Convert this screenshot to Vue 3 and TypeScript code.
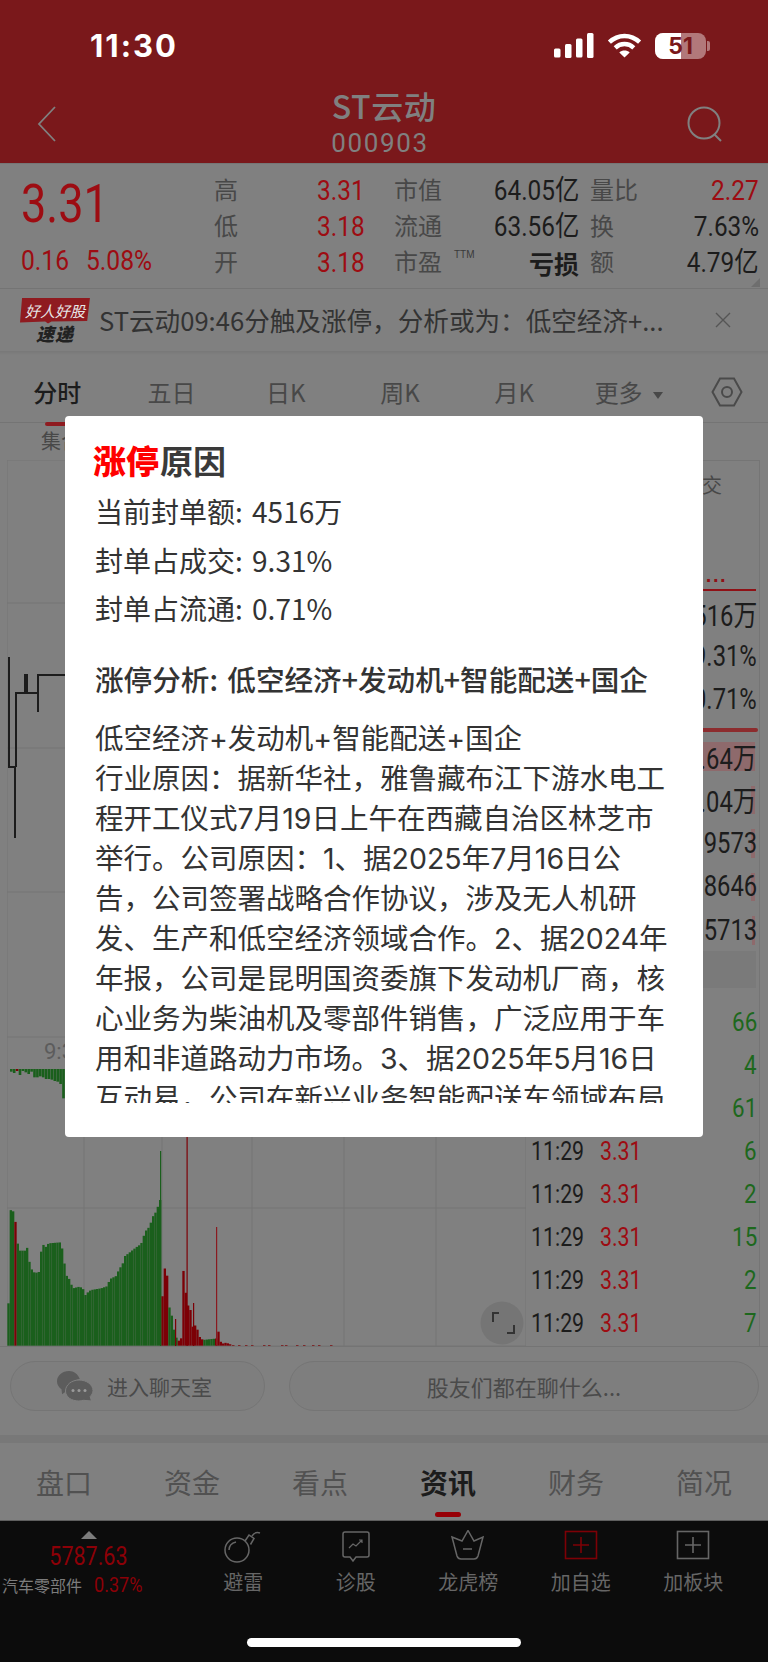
<script setup lang="ts">
const stats = [
  [{ l: '高', v: '3.31', c: 'red' }, { l: '市值', v: '64.05亿', c: '' }, { l: '量比', v: '2.27', c: 'red' }],
  [{ l: '低', v: '3.18', c: 'red' }, { l: '流通', v: '63.56亿', c: '' }, { l: '换', v: '7.63%', c: '' }],
  [{ l: '开', v: '3.18', c: 'red' }, { l: '市盈', v: '亏损', c: 'loss' }, { l: '额', v: '4.79亿', c: '' }],
]
const periods = ['分时', '五日', '日K', '周K', '月K']
const paragraph = [
  '低空经济+发动机+智能配送+国企',
  '行业原因：据新华社，雅鲁藏布江下游水电工',
  '程开工仪式7月19日上午在西藏自治区林芝市',
  '举行。公司原因：1、据2025年7月16日公',
  '告，公司签署战略合作协议，涉及无人机研',
  '发、生产和低空经济领域合作。2、据2024年',
  '年报，公司是昆明国资委旗下发动机厂商，核',
  '心业务为柴油机及零部件销售，广泛应用于车',
  '用和非道路动力市场。3、据2025年5月16日',
  '互动易，公司在新兴业务智能配送车领域布局',
]
const bookTop = ['4516万', '9.31%', '0.71%']
const bookRows = [
  { v: '1.64万', w: 200 },
  { v: '1.04万', w: 4 },
  { v: '9573', w: 4 },
  { v: '8646', w: 4 },
  { v: '5713', w: 3 },
]
const ticks = [66, 4, 61, 6, 2, 15, 2, 7]
const tabs = ['盘口', '资金', '看点', '资讯', '财务', '简况']

type P = [number, number]
const envelope: P[] = [
  [22, 790], [28, 510], [38, 515], [45, 558], [52, 632], [75, 632], [80, 618], [86, 675], [95, 695], [105, 700],
  [110, 690], [115, 700], [120, 635], [128, 612], [135, 622], [142, 610], [180, 607], [187, 650], [195, 705],
  [205, 718], [215, 745], [235, 740], [245, 745], [253, 765], [262, 755], [270, 750], [300, 745], [320, 738],
  [325, 718], [345, 708], [352, 692], [365, 670], [372, 648], [405, 622], [420, 612], [432, 575], [445, 560],
  [455, 530], [465, 515], [477, 480], [482, 795], [490, 690], [496, 663], [502, 795], [510, 815], [520, 875],
  [530, 905], [540, 895], [545, 688], [552, 705], [555, 785], [568, 810], [575, 860], [585, 855], [595, 890],
  [605, 900], [650, 895], [653, 865], [660, 912], [675, 908], [690, 914],
]
function topAt(x: number): number {
  for (let i = 1; i < envelope.length; i++) {
    const [x0, y0] = envelope[i - 1]
    const [x1, y1] = envelope[i]
    if (x <= x1) return y0 + ((y1 - y0) * (x - x0)) / (x1 - x0)
  }
  return 915
}
const GREEN = '#1a5f1c'
const RED = '#7c0006'
const greenAfter = [505, 512, 519, 526, 610, 617, 624, 631, 638]
const bars: { x: number; y: number; h: number; c: string }[] = []
for (let zx = 22; zx < 690; zx += 7) {
  const top = topAt(zx)
  const isRed = (zx >= 482 && !greenAfter.includes(zx)) || (zx >= 43 && zx < 50)
  bars.push({ x: zx / 3, y: 1040 + top / 3, h: (917 - top) / 3, c: isRed ? RED : GREEN })
}
const spikes = [
  { x: 160, y: 1151, c: GREEN },
  { x: 186.5, y: 1130, c: RED },
  { x: 216, y: 1227, c: '#8a1a20' },
  { x: 193, y: 1303, c: RED },
  { x: 175, y: 1319, c: RED },
].map((s) => ({ ...s, h: 1346 - s.y }))
const hanging = [8, 12, 6, 18, 6, 10, 15, 8, 25, 25, 22, 25, 30, 30, 32, 36, 38, 45, 88]
const tiny = [232, 238, 245, 251, 263, 268, 281, 285, 296, 303, 312, 318, 330]
const vGrid = [84, 162, 252, 344, 436]
const hGrid = [603, 748, 892, 1037, 1208]
</script>

<template>
  <div class="app">
    <header class="head">
      <div class="status">
        <span class="clock">11:30</span>
        <div class="status-icons">
          <svg width="40" height="25" viewBox="0 0 40 25" fill="#fff">
            <rect x="0" y="15.5" width="6.5" height="9" rx="1.5" />
            <rect x="11" y="11" width="6.5" height="14" rx="1.5" />
            <rect x="22" y="5.5" width="6.5" height="19" rx="1.5" />
            <rect x="33" y="0" width="6.5" height="25" rx="1.5" />
          </svg>
          <svg width="35" height="25" viewBox="0 0 35 25" fill="none" stroke="#fff" stroke-width="4.4">
            <path d="M2.4 9.2C11 .9 24 .9 32.6 9.2" />
            <path d="M8.2 14.8c5.3-5 13.3-5 18.6 0" />
            <path d="M17.5 24.6l-5.2-5.2c3-2.6 7.4-2.6 10.4 0z" fill="#fff" stroke="none" />
          </svg>
          <div class="battery">
            <div class="battery-body"><span class="battery-fill"></span><span class="battery-num">51</span></div>
            <span class="battery-nub"></span>
          </div>
        </div>
      </div>
      <div class="nav">
        <svg class="back" width="20" height="36" viewBox="0 0 20 36" fill="none" stroke="#808080" stroke-width="1.8">
          <path d="M18 1L2 18l16 17" />
        </svg>
        <div class="nav-title">
          <div class="name">ST云动</div>
          <div class="code">000903</div>
        </div>
        <svg class="find" width="36" height="36" viewBox="0 0 36 36" fill="none" stroke="#808080" stroke-width="2">
          <circle cx="17" cy="17" r="15.5" />
          <path d="M27 28l7 7" />
        </svg>
      </div>
    </header>

    <section class="quote">
      <div class="price">
        <div class="last">3.31</div>
        <div class="change"><span>0.16</span><span>5.08%</span></div>
      </div>
      <div class="stats">
        <div v-for="(row, r) in stats" :key="r" class="stat-row">
          <div v-for="(s, i) in row" :key="s.l" class="stat" :class="'col' + i">
            <span class="label">{{ s.l }}</span>
            <sup v-if="s.l === '市盈'" class="ttm">TTM</sup>
            <span class="value" :class="s.c">{{ s.v }}</span>
          </div>
        </div>
      </div>
      <span class="corner"></span>
    </section>

    <section class="news">
      <div class="logo">
        <div class="flag">好人好股</div>
        <div class="speed">速递</div>
      </div>
      <span class="news-text">ST云动09:46分触及涨停，分析或为：低空经济+...</span>
      <svg class="close" width="16" height="16" viewBox="0 0 16 16" stroke="#555" stroke-width="1.4">
        <path d="M1 1l14 14M15 1L1 15" />
      </svg>
    </section>
    <div class="strip-top"></div>

    <nav class="periods">
      <span v-for="(p, i) in periods" :key="p" class="period" :class="{ on: i === 0 }">{{ p }}</span>
      <span class="period">更多<i class="caret"></i></span>
      <svg class="hex" width="32" height="32" viewBox="0 0 32 32" fill="none" stroke="#4a4a4a" stroke-width="2">
        <path d="M9 2.5h14L30.5 16 23 29.5H9L1.500 16z" />
        <circle cx="16" cy="16" r="5" />
      </svg>
    </nav>
    <div class="subrow">集合竞价</div>

    <section class="chart">
      <svg class="plot" width="519" height="886" viewBox="7 460 519 886">
        <line v-for="x in vGrid" :key="'v' + x" :x1="x" y1="460" :x2="x" y2="1346" stroke="#757575" />
        <line v-for="y in hGrid" :key="'h' + y" x1="7" :y1="y" x2="526" :y2="y" stroke="#757575" />
        <rect x="7" y="460" width="519" height="886" fill="none" stroke="#757575" />
        <polyline points="9,657 9,767 15,767 15,838" fill="none" stroke="#1c1c1c" stroke-width="2" />
        <polyline points="16,767 16,693 25,693 25,675 27,675 27,693 38,693 38,712 38,675 66,675" fill="none" stroke="#1c1c1c" stroke-width="2" />
        <text x="44" y="1059" class="axis">9:30</text>
        <rect v-for="(h, i) in hanging" :key="'t' + i" :x="10 + i * 2.9" y="1069" width="2.6" :height="h / 3"
          :fill="i === 2 ? RED : GREEN" />
        <rect v-for="(b, i) in bars" :key="'b' + i" :x="b.x" :y="b.y" width="2.33" :height="b.h" :fill="b.c" />
        <rect v-for="(s, i) in spikes" :key="'s' + i" :x="s.x" :y="s.y" width="1.2" :height="s.h" :fill="s.c" />
        <rect v-for="x in tiny" :key="'m' + x" :x="x" y="1345" width="2.500" height="1" fill="#7c2a2c" />
        <circle cx="502" cy="1323" r="21.500" fill="#757575" />
        <path d="M499 1313h-6v9M507 1333h7v-8" fill="none" stroke="#333" stroke-width="2" />
      </svg>
      <div class="panel">
        <div class="book-head">
          <span class="book-title">成交</span>
          <span class="dots">...</span>
        </div>
        <div v-for="v in bookTop" :key="v" class="book-row"><span class="num">{{ v }}</span></div>
        <div class="book-rule"></div>
        <div class="book-list">
          <div v-for="b in bookRows" :key="b.v" class="book-row tall">
            <i class="book-bar" :style="{ width: b.w + 'px' }"></i>
            <span class="num">{{ b.v }}</span>
          </div>
        </div>
        <div class="band"></div>
        <div class="ticks">
          <div v-for="(t, i) in ticks" :key="i" class="tick">
            <template v-if="i > 2">
              <span class="time">11:29</span>
              <span class="tick-price">3.31</span>
            </template>
            <span class="vol">{{ t }}</span>
          </div>
        </div>
      </div>
    </section>

    <section class="chat">
      <div class="pill room">
        <svg width="36" height="30" viewBox="0 0 36 30" fill="#5c5c5c">
          <path d="M12 0C5.400 0 0 4.500 0 10.200c0 3.300 1.800 6.200 4.500 8l.6 5 4.600-3.100C12 12.500 16.500 8.600 22.800 7.900 21 3.200 17 0 12 0z" />
          <path d="M22 9c-7.400 0-13.500 5-13.500 11S14.600 30 21.800 30c1.700 0 3-.3 4.500-.7L34.500 30l-1.300-4.500c1.700-1.700 2.800-3.700 2.800-6C36 13.800 29.700 9 22 9z" stroke="#808080" />
          <g fill="#9a9a9a"><circle cx="16" cy="19.500" r="1.500" /><circle cx="22" cy="19.500" r="1.500" /><circle cx="28" cy="19.500" r="1.500" /></g>
        </svg>
        <span>进入聊天室</span>
      </div>
      <div class="pill talk">股友们都在聊什么...</div>
    </section>
    <div class="strip"></div>

    <nav class="tabs">
      <span v-for="(t, i) in tabs" :key="t" class="tab" :class="{ on: i === 3 }">{{ t }}</span>
    </nav>

    <footer class="bar">
      <div class="bar-row">
        <div class="index">
          <i class="up"></i>
          <div class="index-num"><span>5787.63</span></div>
          <div class="index-sub"><span>汽车零部件</span><b>0.37%</b></div>
        </div>
        <div class="action">
          <svg width="44" height="34" viewBox="221 1530 44 34" fill="none" stroke="#666" stroke-width="1.500">
            <circle cx="237" cy="1550" r="12" />
            <path d="M229 1550c0-4 3-7 7-8" />
            <path d="M245 1541l4-6 5 3.500-3.500 6" />
            <path d="M252 1536c2-3 5-4 8-3" />
          </svg>
          <span>避雷</span>
        </div>
        <div class="action">
          <svg width="44" height="34" viewBox="333 1530 44 34" fill="none" stroke="#666" stroke-width="1.500">
            <path d="M344 1532h22a2 2 0 0 1 2 2v21a2 2 0 0 1-2 2h-11l-3 4-3-4h-5a2 2 0 0 1-2-2v-21a2 2 0 0 1 2-2z" />
            <path d="M348 1548l4-4 3 2 6-6M358 1540h3v3" stroke-width="1.200" />
          </svg>
          <span>诊股</span>
        </div>
        <div class="action">
          <svg width="44" height="34" viewBox="446 1530 44 34" fill="none" stroke="#666" stroke-width="1.500">
            <path d="M452 1537l10 4 6-10.500 6 10.500 9-4-5 19q-1 3-4 3h-13q-3 0-4-3z" />
            <path d="M463 1549h9" />
          </svg>
          <span>龙虎榜</span>
        </div>
        <div class="action">
          <svg width="44" height="34" viewBox="558 1530 44 34" fill="none" stroke="#7d0006" stroke-width="1.600">
            <rect x="564.500" y="1531.500" width="31" height="27" />
            <path d="M572 1545h16M580 1537v16" />
          </svg>
          <span>加自选</span>
        </div>
        <div class="action">
          <svg width="44" height="34" viewBox="671 1530 44 34" fill="none" stroke="#666" stroke-width="1.600">
            <rect x="677.500" y="1531.500" width="31" height="27" />
            <path d="M685 1545h16M693 1537v16" />
          </svg>
          <span>加板块</span>
        </div>
      </div>
      <div class="home"></div>
    </footer>

    <aside class="modal">
      <h2 class="modal-title"><em>涨停</em>原因</h2>
      <p class="fact">当前封单额: 4516万</p>
      <p class="fact">封单占成交: 9.31%</p>
      <p class="fact">封单占流通: 0.71%</p>
      <p class="analysis">涨停分析: 低空经济+发动机+智能配送+国企</p>
      <div class="body">
        <div v-for="line in paragraph" :key="line" class="line">{{ line }}</div>
      </div>
    </aside>
  </div>
</template>

<style>
html, body { margin: 0; background: #808080; }
</style>

<style scoped>
.app {
  --cjk: "Noto Sans CJK SC", sans-serif;
  --num: "Roboto", "Noto Sans CJK SC", sans-serif;
  position: relative;
  width: 768px;
  height: 1662px;
  overflow: hidden;
  background: #808080;
  font-family: var(--cjk);
  color: #1c1c1c;
}
.head { height: 164px; background: #7a181b; box-sizing: border-box; border-bottom: 1px solid #767676; }
.status { height: 84px; display: flex; justify-content: space-between; padding: 33px 58px 0 90px; box-sizing: border-box; }
.clock { font-family: "Inter", sans-serif; font-weight: 700; font-size: 31px; line-height: 26px; color: #fff; letter-spacing: 2px; }
.status-icons { display: flex; gap: 13px; align-items: flex-start; }
.battery { display: flex; align-items: center; gap: 1px; }
.battery-body { position: relative; width: 51px; height: 26px; border-radius: 8px; background: rgba(255,255,255,.42); }
.battery-fill { position: absolute; left: 0; top: 0; bottom: 0; width: 26px; background: #fff; border-radius: 8px 0 0 8px; }
.battery-num { position: absolute; inset: 0; text-align: center; font: 700 23px/26px "Inter", sans-serif; color: #7a181b; }
.battery-nub { width: 3px; height: 10px; background: rgba(255,255,255,.42); border-radius: 0 2px 2px 0; }
.nav { display: grid; grid-template-columns: 1fr auto 1fr; align-items: center; height: 79px; padding: 0 45px 0 37px; }
.back { justify-self: start; }
.find { justify-self: end; }
.nav-title { text-align: center; margin-top: -8px; }
.name { font-size: 32px; font-weight: 500; line-height: 46px; color: #808080; padding-left: 8px; letter-spacing: .5px; }
.code { font-family: "Roboto", sans-serif; font-size: 26px; line-height: 30px; letter-spacing: 1.600px; color: #808080; }

.quote { position: relative; display: flex; height: 125px; padding-top: 9px; box-sizing: border-box; border-bottom: 1px solid #747474; }
.price { width: 214px; padding-left: 21px; box-sizing: border-box; color: #9d0c12; font-family: var(--num); }
.last { font-size: 53px; line-height: 62px; height: 70px; transform: scaleX(.85); transform-origin: left center; }
.change { display: flex; font-size: 28px; line-height: 36px; }
.change span { display: inline-block; transform: scaleX(.88); transform-origin: left center; }
.change span:first-child { width: 65px; }
.stats { display: flex; flex-direction: column; }
.stat-row { display: flex; height: 36px; align-items: center; }
.stat { position: relative; display: flex; justify-content: space-between; align-items: center; }
.col0 { width: 151px; margin-right: 29px; }
.col1 { width: 185px; margin-right: 11px; }
.col2 { width: 169px; }
.label { font-size: 24px; line-height: 32px; margin-top: -4px; color: #484848; }
.ttm { position: absolute; left: 60px; top: 4px; font: 10px/12px "Liberation Sans", sans-serif; color: #3a3a3a; }
.value { display: inline-block; font-family: var(--num); font-size: 28px; line-height: 36px; color: #1c1c1c; transform: scaleX(.87); transform-origin: right center; }
.value.red { color: #9d0c12; }
.value.loss { font-family: var(--cjk); font-size: 25px; font-weight: 700; transform: none; }
.corner { position: absolute; right: 8px; bottom: 1px; width: 0; height: 0; border-left: 9px solid transparent; border-bottom: 9px solid #6e6e6e; }

.news { display: flex; align-items: center; height: 62px; }
.logo { width: 99px; padding-left: 20px; box-sizing: border-box; }
.flag {
  width: 70px; height: 26px; background: #8f1b20;
  clip-path: polygon(3% 0, 100% 0, 96% 90%, 45% 92%, 40% 100%, 36% 92%, 0 96%);
  color: #e8e8e8; font-size: 15px; line-height: 25px; text-align: center; font-style: italic; white-space: nowrap;
}
.speed { width: 70px; text-align: center; font-size: 18px; font-weight: 900; font-style: italic; line-height: 19px; color: #222; letter-spacing: 1px; }
.news-text { flex: 1; font-size: 25.600px; line-height: 32px; color: #333; white-space: nowrap; }
.close { margin: 0 37px 0 0; }
.strip-top { height: 4px; background: linear-gradient(#787878, #808080); }

.periods { position: relative; display: flex; align-items: center; height: 68px; padding-top: 6px; box-sizing: border-box; border-bottom: 1px solid #747474; }
.period { position: relative; width: 114.300px; text-align: center; font-size: 24px; line-height: 32px; color: #484848; }
.period.on { color: #1c1c1c; font-weight: 500; }
.period.on::after { content: ""; position: absolute; left: 45px; top: 46px; width: 24px; height: 4px; background: #8f1b20; border-radius: 2px; }
.caret { display: inline-block; margin-left: 10px; vertical-align: 3px; border: 5.500px solid transparent; border-top: 7px solid #484848; border-bottom: 0; }
.hex { position: absolute; left: 711px; top: 21px; }
.subrow { height: 37px; padding-left: 41px; font-size: 20px; line-height: 36px; color: #484848; }

.chart { display: flex; height: 886px; margin-left: 7px; width: 753px; }
.plot { display: block; flex: none; }
.axis { font: 22px "Roboto", sans-serif; fill: #5c5c5c; }
.panel { width: 234px; box-sizing: border-box; border: solid #757575; border-width: 1px 1px 0 0; font-family: var(--num); }
.book-head { position: relative; height: 130px; margin-right: 3px; border-bottom: 2px solid #8f1116; box-sizing: border-box; }
.book-title { position: absolute; right: 34px; top: 9px; font: 20px/30px var(--cjk); color: #484848; }
.dots { position: absolute; right: 29px; bottom: 0; font: 700 20px/28px "Liberation Sans", sans-serif; color: #8f1116; letter-spacing: 1.500px; }
.book-row { position: relative; height: 43px; display: flex; justify-content: flex-end; align-items: center; padding-right: 2px; font-size: 29px; color: #1c1c1c; }
.num { position: relative; display: inline-block; transform: scaleX(.82); transform-origin: right center; }
.book-row.tall { height: 43.500px; }
.book-rule { height: 4px; margin: 8px 1px 0 0; background: #8c2c2e; border-radius: 2px; }
.book-list { margin-top: 2px; }
.book-bar { position: absolute; right: 4px; top: 8px; bottom: 7px; background: #8e6a6c; }
.band { height: 37px; margin: -1px 3px 13px 0; background: #7a7a7a; }
.ticks { display: flex; flex-direction: column; }
.tick { display: flex; height: 43px; align-items: center; font-size: 26px; padding-left: 5px; padding-right: 2px; }
.time { display: inline-block; width: 69px; color: #1c1c1c; transform: scaleX(.82); transform-origin: left center; }
.tick-price { display: inline-block; color: #9d0c12; transform: scaleX(.82); transform-origin: left center; }
.vol { display: inline-block; margin-left: auto; color: #1d681d; transform: scaleX(.86); transform-origin: right center; }

.chat { display: flex; gap: 24px; height: 89px; padding: 14px 9px 0 10px; box-sizing: border-box; border-top: 1px solid #747474; }
.pill { display: flex; align-items: center; justify-content: center; height: 50px; border: 1.500px solid #757575; border-radius: 25px; background: #7e7e7e; box-sizing: border-box; font-size: 21px; color: #4a4a4a; }
.room { width: 255px; gap: 14px; padding-right: 6px; }
.talk { flex: 1; font-size: 22px; }
.strip { height: 8px; background: #787878; }

.tabs { display: flex; height: 78px; border-bottom: 1px solid #5e5e5e; box-sizing: border-box; }
.tab { position: relative; width: 128px; text-align: center; font-size: 28px; line-height: 78px; color: #515151; }
.tab.on { color: #1c1c1c; font-weight: 700; }
.tab.on::after { content: ""; position: absolute; left: 51px; bottom: 3px; width: 26px; height: 5px; border-radius: 3px; background: #970006; }

.bar { height: 141px; background: #0c0c0c; padding-top: 9px; box-sizing: border-box; }
.bar-row { display: flex; height: 72px; }
.index { width: 187px; position: relative; flex: none; }
.up { position: absolute; left: 81px; top: 1px; border: 8px solid transparent; border-bottom: 8px solid #7c7c7c; border-top: 0; }
.index-num { width: 176px; text-align: center; padding-top: 12px; font: 25px/30px "Roboto", sans-serif; color: #8c0007; }
.index-num span { display: inline-block; transform: scaleX(.86); }
.index-sub { display: flex; align-items: center; gap: 12px; padding: 1px 0 0 2px; white-space: nowrap; }
.index-sub span { font-size: 16px; line-height: 24px; color: #7c7c7c; }
.index-sub b { display: inline-block; font: 400 21px/24px "Roboto", sans-serif; color: #8c0007; transform: scaleX(.86); transform-origin: left center; }
.action { width: 112.500px; display: flex; flex-direction: column; align-items: center; }
.action svg { display: block; }
.action span { font-size: 20px; line-height: 36px; color: #666; }
.home { width: 274px; height: 9px; margin: 36px auto 0; border-radius: 5px; background: #fff; }

.modal {
  position: absolute; left: 65px; top: 416px; width: 638px; height: 721px;
  box-sizing: border-box; padding: 24px 0 0 30px; background: #fff; border-radius: 4px; color: #333;
}
.modal-title { margin: 0 0 0 -2px; font-size: 33px; line-height: 40px; font-weight: 700; color: #3a3a3a; }
.modal-title em { font-style: normal; font-weight: 900; color: #f00; margin-right: 1px; }
.fact { margin: 0; font-size: 28px; line-height: 48.500px; word-spacing: 3px; }
.fact:first-of-type { margin-top: 7px; }
.analysis { margin: 22px 0 0; font-size: 28.600px; line-height: 48px; font-weight: 500; word-spacing: 3px; }
.body { height: 384px; margin-top: 16px; overflow: hidden; }
.line { height: 40px; font-family: "Inter", "Noto Sans CJK SC", sans-serif; font-size: 28.500px; line-height: 40px; white-space: nowrap; }
</style>
